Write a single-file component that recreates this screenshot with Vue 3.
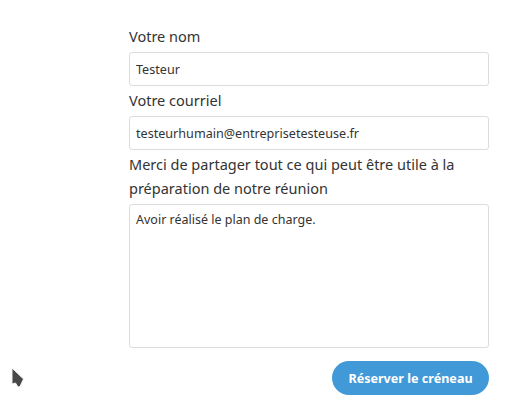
<template>
  <div class="page">
    <form class="booking-form" @submit.prevent>
      <label class="field-label" for="name">Votre nom</label>
      <input id="name" v-model="name" class="field-input" type="text" />

      <label class="field-label" for="email">Votre courriel</label>
      <input id="email" v-model="email" class="field-input" type="text" />

      <label class="field-label" for="notes">
        Merci de partager tout ce qui peut être utile à la préparation de notre réunion
      </label>
      <textarea id="notes" v-model="notes" class="field-input field-area"></textarea>

      <div class="actions">
        <button class="submit-btn" type="submit">Réserver le créneau</button>
      </div>
    </form>

    <!-- mouse pointer caught in the screenshot -->
    <svg class="cursor" width="16" height="24" viewBox="0 0 16 24">
      <path d="M2 1 L2 17 L5.500 16 L8 20 L10 19.500 L13.500 12 Z" fill="#484848" stroke="#f2f2f2" stroke-width="1" />
    </svg>
  </div>
</template>

<script setup>
import { ref } from 'vue';

const name = ref('Testeur');
const email = ref('testeurhumain@entreprisetesteuse.fr');
const notes = ref('Avoir réalisé le plan de charge.');
</script>

<style>
html,
body {
  background: #fff;
}
</style>

<style scoped>
.page {
  position: relative;
  width: 508px;
  height: 416px;
  overflow: hidden;
  background: #fff;
  font-family: "Noto Sans", "Open Sans", sans-serif;
  color: #333;
}

.booking-form {
  display: flex;
  flex-direction: column;
  width: 360px;
  padding: 24px 0 0 129px;
}

.field-label {
  font-size: 14.5px;
  line-height: 24px;
  margin-bottom: 4px;
}

.field-input {
  box-sizing: border-box;
  width: 100%;
  height: 34px;
  margin-bottom: 2px;
  padding: 0 6px;
  border: 1px solid #dcdcdc;
  border-radius: 3px;
  background: #fff;
  color: #333;
  font-family: inherit;
  font-size: 12.6px;
  outline: none;
}

.field-area {
  height: 144px;
  margin-bottom: 13px;
  padding: 6px;
  font-size: 12.5px;
  line-height: 18px;
  resize: none;
}

.actions {
  display: flex;
  justify-content: flex-end;
}

.submit-btn {
  width: 157px;
  height: 34px;
  border: none;
  border-radius: 17px;
  background: #4299d7;
  color: #fff;
  font-family: inherit;
  font-size: 12.6px;
  font-weight: 700;
  cursor: pointer;
}

.cursor {
  position: absolute;
  left: 10px;
  top: 367px;
}
</style>
